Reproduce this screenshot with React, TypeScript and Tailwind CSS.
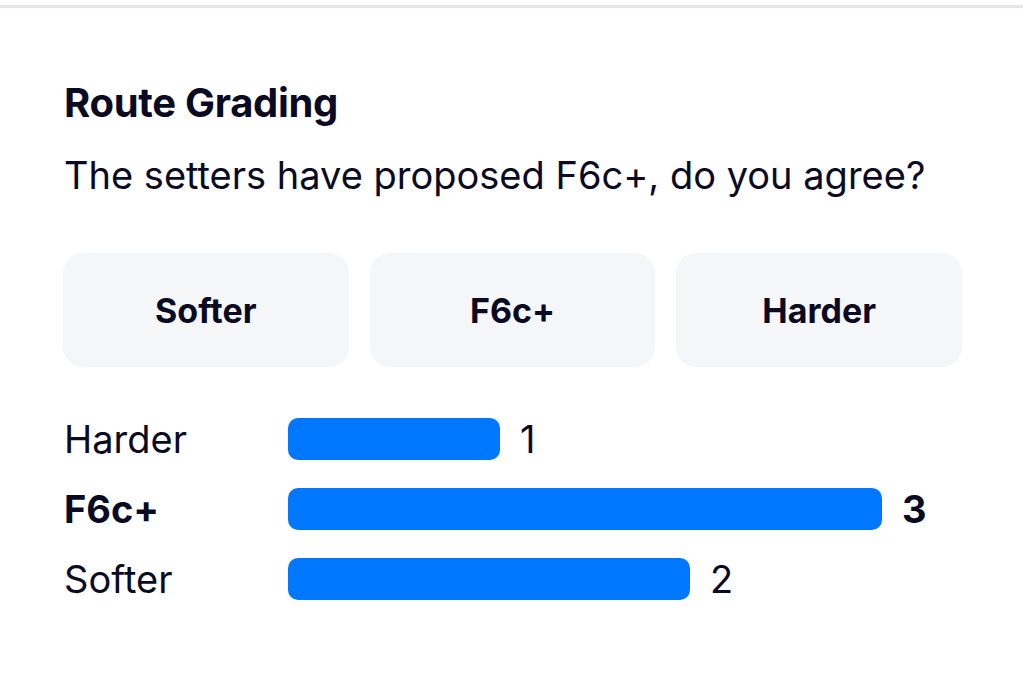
import { useState } from "react";

type Vote = { label: string; count: number; proposed?: boolean };

const votes: Vote[] = [
  { label: "Harder", count: 1 },
  { label: "F6c+", count: 3, proposed: true },
  { label: "Softer", count: 2 },
];

// bar widths in px, matched to the screenshot
const barWidth: Record<number, number> = { 1: 212, 2: 402, 3: 594 };

export default function App() {
  const [choice, setChoice] = useState<string | null>(null);

  return (
    <div className="min-h-screen bg-white text-[#0a0a23] font-['Inter','Noto_Sans',sans-serif]">
      <div className="pt-[5px]">
        <div className="h-[3px] bg-[#e4e7eb]" />
      </div>

      <div className="pl-[63px] pr-[61px] pt-[71px]">
        <h2 className="pl-px text-[40px] leading-[48px] font-bold tracking-[-0.3px]">Route Grading</h2>
        <p className="pl-px mt-[24px] text-[38px] leading-[48px]">
          The setters have proposed F6c+, do you agree?
        </p>

        <div className="mt-[54px] grid grid-cols-3 gap-[21px]">
          {["Softer", "F6c+", "Harder"].map((b) => (
            <button
              key={b}
              onClick={() => setChoice(b)}
              className={`h-[114px] rounded-[20px] text-[34px] font-bold ${
                choice === b ? "bg-[#e8eefc]" : "bg-[#f5f6f8]"
              }`}
            >
              {b}
            </button>
          ))}
        </div>

        <div className="mt-[37px] flex flex-col">
          {votes.map((v) => (
            <div key={v.label} className="h-[70px] flex items-center">
              <span
                className={`pl-px w-[225px] shrink-0 text-[38px] ${v.proposed ? "font-bold" : ""}`}
              >
                {v.label}
              </span>
              <div
                className="h-[42px] rounded-[10px] bg-[#0077ff]"
                style={{ width: barWidth[v.count] }}
              />
              <span className={`ml-[20px] text-[38px] ${v.proposed ? "font-bold" : ""}`}>
                {v.count}
              </span>
            </div>
          ))}
        </div>
      </div>
    </div>
  );
}
